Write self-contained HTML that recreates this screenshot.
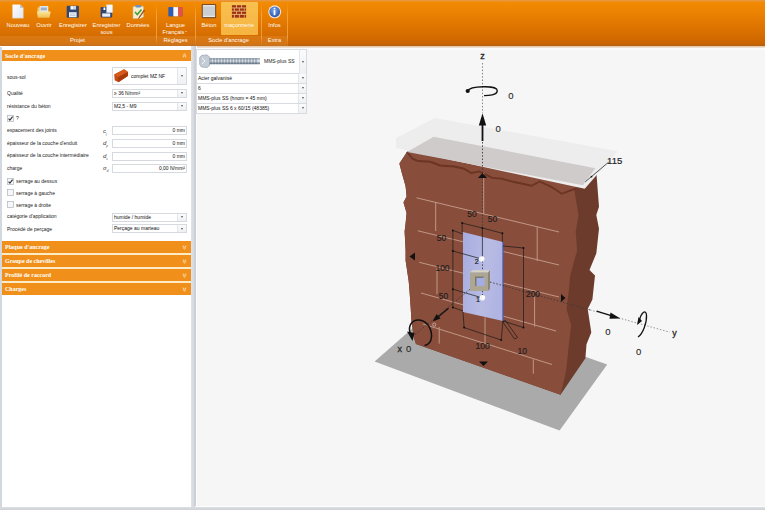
<!DOCTYPE html>
<html><head><meta charset="utf-8">
<style>
*{margin:0;padding:0;box-sizing:border-box}
html,body{width:765px;height:510px;overflow:hidden;background:#f6f6f6;font-family:"Liberation Sans",sans-serif}
.a{position:absolute}
#rib{left:0;top:0;width:765px;height:46px;background:linear-gradient(#e59a4c 0px,#f28a02 2.5px,#ec8302 12px,#df7500 26px,#d26a00 38px,#c96400 44px,#ad5e18 46px)}
.lab{position:absolute;color:#fffaf4;font-size:5.7px;white-space:nowrap;text-align:center;transform:translateX(-50%);line-height:7px}
.sep{position:absolute;top:3px;width:1px;height:42px;background:linear-gradient(rgba(255,200,120,0),rgba(255,190,110,.55) 30%,rgba(255,190,110,.55) 80%,rgba(255,200,120,0))}
#lp{left:0;top:46px;width:192px;height:464px;background:#fff}
.hd{position:absolute;left:2px;width:189px;height:11px;background:#f0901a;color:#fff;font-weight:bold;font-family:"Liberation Serif",serif;font-size:6px;line-height:12px;padding-left:3px;white-space:nowrap}
.hd i{position:absolute;right:5px;top:0;font-style:normal;font-size:5px}
.lb{position:absolute;left:7px;font-size:5px;color:#1a1a1a;white-space:nowrap;line-height:6px}
.sym{position:absolute;left:103px;font-size:6px;color:#333;font-style:italic;line-height:6px}
.cb{position:absolute;left:112px;width:75px;background:#fff;border:1px solid #d6d9de;font-size:5px;color:#111;white-space:nowrap;padding-left:1px}
.cb b{position:absolute;right:0;top:0;bottom:0;width:9px;border-left:1px solid #e3e6ea;background:linear-gradient(#fafbfc,#eef0f3)}
.cb b:after{content:"";position:absolute;left:3px;top:50%;margin-top:-1px;border-left:1.5px solid transparent;border-right:1.5px solid transparent;border-top:2px solid #555}
.inp{position:absolute;left:112px;width:75px;height:9px;background:#fff;border:1px solid #d6d9de;font-size:5px;color:#111;text-align:right;padding-right:1px;line-height:7px;white-space:nowrap}
.chk{position:absolute;left:7px;width:6px;height:6px;border:1px solid #b9bec6;background:#f4f5f7}
.lb2{position:absolute;left:16px;font-size:5px;color:#1a1a1a;white-space:nowrap;line-height:6px}
.rc{position:absolute;left:196px;width:111px;height:10px;background:#fff;border:1px solid #d8dbe0;border-top:none;font-size:5px;color:#111;line-height:9px;padding-left:1px;white-space:nowrap}
.rc b{position:absolute;right:0;top:0;bottom:0;width:8px;border-left:1px solid #e3e6ea;background:linear-gradient(#fafbfc,#eef0f3)}
.rc b:after{content:"";position:absolute;left:2.5px;top:50%;margin-top:-1px;border-left:1.5px solid transparent;border-right:1.5px solid transparent;border-top:2px solid #555}
</style></head><body>
<!-- ribbon -->
<div id="rib" class="a"></div>
<div class="a" style="left:0;top:35.5px;width:288px;height:10px;background:linear-gradient(rgba(255,190,110,.16),rgba(255,185,100,.2))"></div>
<div class="a" style="left:0;top:46px;width:765px;height:1.5px;background:linear-gradient(#e4c09c,#f2e6dc)"></div>
<div class="a" style="left:0;top:47.5px;width:191px;height:2.5px;background:#f8f4f0"></div>
<div class="a" style="left:195px;top:47.5px;width:570px;height:2.5px;background:#fbfbfc"></div>

<div class="sep" style="left:156px"></div>
<div class="sep" style="left:195px"></div>
<div class="sep" style="left:261px"></div>
<div class="sep" style="left:287px"></div>

<!-- highlight -->
<div class="a" style="left:221px;top:2px;width:37px;height:33px;background:linear-gradient(#f9c050,#f6b440);border-radius:1px"></div>

<svg class="a" style="left:0;top:0" width="300" height="46" viewBox="0 0 300 46">
<defs>
<linearGradient id="doc" x1="0" y1="0" x2="1" y2="1"><stop offset="0" stop-color="#ffffff"/><stop offset="1" stop-color="#dfe6f2"/></linearGradient>
<linearGradient id="fold" x1="0" y1="0" x2="0" y2="1"><stop offset="0" stop-color="#fbe7a0"/><stop offset="1" stop-color="#f0bf50"/></linearGradient>
<radialGradient id="inf" cx="0.45" cy="0.35" r="0.7"><stop offset="0" stop-color="#7aa8ec"/><stop offset="1" stop-color="#1f4ea8"/></radialGradient>
</defs>
<!-- Nouveau -->
<path d="M12.4,4.5 H20.2 L23.4,7.7 V18.3 H12.4 Z" fill="url(#doc)" stroke="#e8b880" stroke-width="0.4"/>
<path d="M20.2,4.5 V7.7 H23.4 Z" fill="#a9b8cc"/>
<!-- Ouvrir -->
<path d="M37.5,7.5 H42 L43,6.3 H48.5 V12 H37.5 Z" fill="#f3c65e"/>
<rect x="39.5" y="6" width="8.5" height="6.5" fill="#dfe6ee"/>
<rect x="40.8" y="7.5" width="6" height="2.8" fill="#9fb0c6"/>
<path d="M36.9,11.5 H50.7 L49.5,17.7 H37.8 Z" fill="url(#fold)"/>
<!-- Enregistrer -->
<rect x="66.7" y="5.7" width="12.2" height="12" rx="1" fill="#33466f"/>
<rect x="70.3" y="6" width="5.8" height="3.6" fill="#c9d2e2"/>
<rect x="71.2" y="6.5" width="1.8" height="2.6" fill="#fff"/>
<rect x="69" y="12.2" width="7.6" height="5" fill="#eaf0f8"/>
<line x1="70" y1="14" x2="75.5" y2="14" stroke="#9aa8c0" stroke-width="0.5"/>
<line x1="70" y1="15.5" x2="75.5" y2="15.5" stroke="#9aa8c0" stroke-width="0.5"/>
<!-- Enregistrer sous -->
<rect x="100.6" y="6.9" width="11.6" height="10.6" rx="1" fill="#33466f"/>
<rect x="102.2" y="13.4" width="8" height="3.3" fill="#eaf0f8"/>
<rect x="103.5" y="7.5" width="1.8" height="2.5" fill="#fff"/>
<rect x="106.6" y="4.8" width="6" height="7.8" fill="#f4f7fb" stroke="#cfd7e4" stroke-width="0.4"/>
<!-- Données -->
<path d="M133,6.5 H143.5 V17 L140,18.6 H133 Z" fill="#f3ecd0" stroke="#c8b890" stroke-width="0.5"/>
<rect x="135.5" y="5" width="5.5" height="2.6" rx="1" fill="#6f8fc8"/>
<path d="M135,12 L137.3,14.5 L141.5,9.5" fill="none" stroke="#3aa030" stroke-width="1.5"/>
<path d="M144.7,10.5 L139.5,17.5 L138.6,18.6 L139.2,17 L144,10 Z" fill="#b05018" stroke="#8a4010" stroke-width="0.6"/>
<!-- flag -->
<rect x="168.3" y="6.9" width="14.4" height="9.6" rx="1" fill="#333" opacity="0.35"/>
<rect x="168.6" y="7.1" width="4.8" height="9.2" fill="#2a5cc0"/>
<rect x="173.4" y="7.1" width="4.8" height="9.2" fill="#f8f8fb"/>
<rect x="178.2" y="7.1" width="4.4" height="9.2" fill="#e25050"/>
<!-- beton -->
<rect x="201.7" y="4" width="14.5" height="14.2" rx="1.2" fill="#7b4b22"/>
<rect x="202.8" y="5.1" width="12.3" height="12" fill="#cbcfd3"/>
<rect x="203" y="5.3" width="12" height="1" fill="#eef0f2"/>
<rect x="203" y="15.8" width="12" height="1" fill="#eef0f2"/>
<!-- brick -->
<rect x="231.9" y="5.2" width="14.2" height="12.5" fill="#f2b88a"/>
<g fill="#9c3608">
<rect x="231.9" y="5.2" width="4.2" height="2.3"/><rect x="236.9" y="5.2" width="4.2" height="2.3"/><rect x="241.9" y="5.2" width="4.2" height="2.3"/>
<rect x="231.9" y="8.4" width="2" height="2.3"/><rect x="234.7" y="8.4" width="4.2" height="2.3"/><rect x="239.7" y="8.4" width="4.2" height="2.3"/><rect x="244.5" y="8.4" width="1.6" height="2.3"/>
<rect x="231.9" y="11.6" width="4.2" height="2.3"/><rect x="236.9" y="11.6" width="4.2" height="2.3"/><rect x="241.9" y="11.6" width="4.2" height="2.3"/>
<rect x="231.9" y="14.8" width="2" height="2.9"/><rect x="234.7" y="14.8" width="4.2" height="2.9"/><rect x="239.7" y="14.8" width="4.2" height="2.9"/><rect x="244.5" y="14.8" width="1.6" height="2.9"/>
</g>
<!-- info -->
<circle cx="274.7" cy="11.8" r="6.5" fill="#f4e2d0"/>
<circle cx="274.7" cy="11.8" r="5.4" fill="url(#inf)"/>
<circle cx="274.5" cy="8.6" r="0.9" fill="#fff"/>
<path d="M273.6,10.2 H275.4 V15.2 H273.6 Z" fill="#fff"/>
</svg>
<div class="lab" style="left:18px;top:21.5px">Nouveau</div>
<div class="lab" style="left:44px;top:21.5px">Ouvrir</div>
<div class="lab" style="left:73px;top:21.5px">Enregistrer</div>
<div class="lab" style="left:106.5px;top:21.5px">Enregistrer<br>sous</div>
<div class="lab" style="left:138px;top:21.5px">Données</div>
<div class="lab" style="left:77.5px;top:37px">Projet</div>
<div class="lab" style="left:175.5px;top:21.5px">Langue</div>
<div class="lab" style="left:173.5px;top:28.5px">Français</div>
<div class="a" style="left:185px;top:30.5px;border-left:1.2px solid transparent;border-right:1.2px solid transparent;border-top:1.6px solid #f8d8b0"></div>
<div class="lab" style="left:175.5px;top:37px">Réglages</div>
<div class="lab" style="left:209px;top:21.5px">Béton</div>
<div class="lab" style="left:239px;top:21.5px">maçonnerie</div>
<div class="lab" style="left:228.5px;top:37px">Socle d'ancrage</div>
<div class="lab" style="left:274.5px;top:21.5px">Infos</div>
<div class="lab" style="left:274.5px;top:37px">Extra</div>

<!-- left panel -->
<div id="lp" class="a"></div>
<div class="a" style="left:0;top:47px;width:2px;height:463px;background:#d3d7de"></div>
<div class="a" style="left:191px;top:46px;width:4.5px;height:464px;background:linear-gradient(90deg,#e0e2e6 0%,#d6d9de 50%,#c6cad0 85%,#d8dbe0 100%)"></div>
<div class="a" style="left:195.5px;top:46px;width:1.5px;height:461px;background:#fcfcfd"></div>
<div class="a" style="left:195px;top:505.5px;width:570px;height:1.5px;background:#fdfdfd"></div>
<div class="a" style="left:0;top:507px;width:765px;height:3px;background:linear-gradient(#dcdfe3,#cdd0d5)"></div>

<div class="hd" style="top:50px">Socle d'ancrage<svg style="position:absolute;right:4.5px;top:3px" width="5" height="5" viewBox="0 0 5 5"><path d="M0.8,2.6 L2.5,1 L4.2,2.6 M0.8,4.4 L2.5,2.8 L4.2,4.4" fill="none" stroke="#fde9c8" stroke-width="0.9"/></svg></div>
<div class="lb" style="top:73.5px">sous-sol</div>
<div class="cb" style="top:67px;height:18px;line-height:16px;padding-left:18px">complet MZ NF<b></b></div>
<svg class="a" style="left:113px;top:68px" width="17" height="16" viewBox="113 68 17 16"><polygon points="114.2,74.5 124.1,69.2 128,71.9 127.8,76 118.4,82.3 114.7,80.2" fill="#c64a12"/><polygon points="114.2,74.5 124.1,69.2 128,71.9 118,77.3" fill="#d55a1c"/><polygon points="118,77.3 128,71.9 127.8,76 118.4,82.3" fill="#a83a0c"/></svg>
<div class="lb" style="top:90px">Qualité</div>
<div class="cb" style="top:88.5px;height:9.5px;line-height:7.5px">≥ 36 N/mm²<b></b></div>
<div class="lb" style="top:103px">résistance du béton</div>
<div class="cb" style="top:101.5px;height:9.5px;line-height:7.5px">M2,5 - M9<b></b></div>
<svg class="a" style="left:7px;top:114.5px" width="7" height="7" viewBox="0 0 7 7"><rect x="0.5" y="0.5" width="6" height="6" fill="#f6f7f9" stroke="#b8bdc5" stroke-width="0.8"/><path d="M1.6,3.6 L2.9,5.2 L5.6,1.6" fill="none" stroke="#333" stroke-width="1.1"/></svg>
<div class="lb2" style="top:115px">?</div>

<div class="lb" style="top:127.2px">espacement des joints</div>
<div class="sym" style="top:127.5px">c<sub style="font-size:3px">j</sub></div>
<div class="inp" style="top:126px">0 mm</div>
<div class="lb" style="top:139.7px;">épaisseur de la couche d'enduit</div>
<div class="sym" style="top:140px">d<sub style="font-size:3px">p</sub></div>
<div class="inp" style="top:138.8px">0 mm</div>
<div class="lb" style="top:152.3px;">épaisseur de la couche intermédiaire</div>
<div class="sym" style="top:152.6px">d<sub style="font-size:3px">s</sub></div>
<div class="inp" style="top:151.5px">0 mm</div>
<div class="lb" style="top:164.8px;">charge</div>
<div class="sym" style="top:165px">σ<sub style="font-size:3px">d</sub></div>
<div class="inp" style="top:164px">0,00 N/mm²</div>

<svg class="a" style="left:7px;top:177.7px" width="7" height="7" viewBox="0 0 7 7"><rect x="0.5" y="0.5" width="6" height="6" fill="#f6f7f9" stroke="#b8bdc5" stroke-width="0.8"/><path d="M1.6,3.6 L2.9,5.2 L5.6,1.6" fill="none" stroke="#333" stroke-width="1.1"/></svg>
<div class="lb2" style="top:178px">serrage au dessus</div>
<svg class="a" style="left:7px;top:189.4px" width="7" height="7" viewBox="0 0 7 7"><rect x="0.5" y="0.5" width="6" height="6" fill="#f6f7f9" stroke="#b8bdc5" stroke-width="0.8"/></svg>
<div class="lb2" style="top:189.7px">serrage à gauche</div>
<svg class="a" style="left:7px;top:201.2px" width="7" height="7" viewBox="0 0 7 7"><rect x="0.5" y="0.5" width="6" height="6" fill="#f6f7f9" stroke="#b8bdc5" stroke-width="0.8"/></svg>
<div class="lb2" style="top:201.5px">serrage à droite</div>
<div class="lb" style="top:213.3px">catégorie d'application</div>
<div class="cb" style="top:212.5px;height:9px;line-height:7px">humide / humide<b></b></div>
<div class="lb" style="top:225.8px">Procédé de perçage</div>
<div class="cb" style="top:224.3px;height:9px;line-height:7px">Perçage au marteau<b></b></div>

<div class="a" style="left:2px;top:252px;width:189px;height:31.5px;background:#fcebc4"></div>
<div class="hd" style="top:241px;height:11.5px">Plaque d'ancrage<svg style="position:absolute;right:4.5px;top:3.5px" width="5" height="5" viewBox="0 0 5 5"><path d="M0.8,0.6 L2.5,2.2 L4.2,0.6 M0.8,2.4 L2.5,4 L4.2,2.4" fill="none" stroke="#fde9c8" stroke-width="0.9"/></svg></div>
<div class="hd" style="top:255px;height:11.5px">Groupe de chevilles<svg style="position:absolute;right:4.5px;top:3.5px" width="5" height="5" viewBox="0 0 5 5"><path d="M0.8,0.6 L2.5,2.2 L4.2,0.6 M0.8,2.4 L2.5,4 L4.2,2.4" fill="none" stroke="#fde9c8" stroke-width="0.9"/></svg></div>
<div class="hd" style="top:269px;height:11.5px">Profilé de raccord<svg style="position:absolute;right:4.5px;top:3.5px" width="5" height="5" viewBox="0 0 5 5"><path d="M0.8,0.6 L2.5,2.2 L4.2,0.6 M0.8,2.4 L2.5,4 L4.2,2.4" fill="none" stroke="#fde9c8" stroke-width="0.9"/></svg></div>
<div class="hd" style="top:283.3px;height:11.5px">Charges<svg style="position:absolute;right:4.5px;top:3.5px" width="5" height="5" viewBox="0 0 5 5"><path d="M0.8,0.6 L2.5,2.2 L4.2,0.6 M0.8,2.4 L2.5,4 L4.2,2.4" fill="none" stroke="#fde9c8" stroke-width="0.9"/></svg></div>

<!-- 3D view right controls -->
<div class="a" style="left:196px;top:49px;width:111px;height:24.5px;background:#fff;border:1px solid #d8dbe0"></div>
<svg class="a" style="left:196px;top:49px" width="111" height="25" viewBox="196 49 111 25">
<defs><linearGradient id="sh" x1="0" y1="0" x2="0" y2="1"><stop offset="0" stop-color="#8a99aa"/><stop offset="0.45" stop-color="#e8eef4"/><stop offset="1" stop-color="#5e6e80"/></linearGradient></defs>
<rect x="208" y="58.2" width="52" height="6" fill="url(#sh)"/>
<g stroke="#4e5c6c" stroke-width="0.6">
<line x1="211" y1="58.2" x2="211" y2="64.2"/><line x1="214" y1="58.2" x2="214" y2="64.2"/><line x1="217" y1="58.2" x2="217" y2="64.2"/><line x1="220" y1="58.2" x2="220" y2="64.2"/><line x1="223" y1="58.2" x2="223" y2="64.2"/><line x1="226" y1="58.2" x2="226" y2="64.2"/><line x1="229" y1="58.2" x2="229" y2="64.2"/><line x1="232" y1="58.2" x2="232" y2="64.2"/><line x1="235" y1="58.2" x2="235" y2="64.2"/><line x1="238" y1="58.2" x2="238" y2="64.2"/><line x1="241" y1="58.2" x2="241" y2="64.2"/><line x1="244" y1="58.2" x2="244" y2="64.2"/><line x1="247" y1="58.2" x2="247" y2="64.2"/><line x1="250" y1="58.2" x2="250" y2="64.2"/><line x1="253" y1="58.2" x2="253" y2="64.2"/><line x1="256" y1="58.2" x2="256" y2="64.2"/>
</g>
<polygon points="201.5,55.5 207,54.9 209.5,57 209.5,65.5 207,67.5 201.5,67 199.7,64.5 199.7,57.5" fill="#c4ccd6" stroke="#8a96a4" stroke-width="0.6"/>
<path d="M202,58 L205,61 L202,64" fill="none" stroke="#f4f8fc" stroke-width="0.9"/>
</svg>
<div class="a" style="left:264px;top:58px;font-size:5px;color:#222;white-space:nowrap">MMS-plus SS</div>
<div class="a" style="left:299px;top:49px;width:8px;height:24.5px;border-left:1px solid #e3e6ea;border-right:1px solid #d8dbe0;border-top:1px solid #d8dbe0;background:linear-gradient(#fafbfc,#eef0f3)"><span style="position:absolute;left:2px;top:11px;border-left:1.5px solid transparent;border-right:1.5px solid transparent;border-top:2px solid #555"></span></div>
<div class="rc" style="top:73.5px">Acier galvanisé<b></b></div>
<div class="rc" style="top:83.5px">6<b></b></div>
<div class="rc" style="top:93.5px">MMS-plus SS (hnom = 45 mm)<b></b></div>
<div class="rc" style="top:103.5px">MMS-plus SS 6 x 60/15 (48385)<b></b></div>

<!-- SCENE -->
<svg class="a" style="left:0;top:0" width="765" height="510" viewBox="0 0 765 510">
<defs>
<filter id="bl" x="-5%" y="-50%" width="110%" height="200%"><feGaussianBlur stdDeviation="0.6"/></filter>
<linearGradient id="pl" x1="0" y1="0" x2="1" y2="0.3"><stop offset="0" stop-color="#a6ace0"/><stop offset="0.65" stop-color="#b8bce4"/><stop offset="1" stop-color="#b0b4e2"/></linearGradient>
</defs>
<!-- floor -->
<polygon points="374.6,361.4 438.8,305.2 607.2,364.6 559.6,430.5" fill="#aaaaaa"/>
<!-- wall right face -->
<polygon points="407,152 433.6,136.7 596,168 599,206.7 596.3,215 599,228.7 596.3,253.4 589.5,270 595,275.4 592.4,299.4 587.7,308.9 591.3,332.4 586.5,344.2 585.4,358.3 560.5,394.8 416,344 414,338 411.5,322 410.7,308 409.7,293.5 408.7,281.2 405.6,260.6 405.6,250 404.6,231.5 405.6,223.2 406.6,213 403.5,202.6 406.6,196.5 405.6,186.2 401.5,171.8 399.4,163.5" fill="#6d3b2c"/>
<!-- wall front face -->
<polygon points="407,152 399.4,163.5 401.5,171.8 405.6,186.2 406.6,196.5 403.5,202.6 406.6,213 405.6,223.2 404.6,231.5 405.6,250 405.6,260.6 408.7,281.2 409.7,293.5 410.7,308 411.5,322 414,338 416,344 560.5,394.8 565.3,374.8 566.5,367.8 568.9,344.2 571.2,325.3 566.5,308.9 568.9,290 570.2,275.4 577,250.7 575.7,231.4 578.5,215 574.3,190.2 578,185" fill="#894d3b"/>
<!-- jagged top shading -->
<polyline points="407,152 412.5,158.6 418,161 430.5,161.8 440,165.5 454,166.5 463.5,168.5 471.4,173 479.2,171.4 492.3,177.9 501.4,178.6 513.2,181.8 531.5,185.8 539.7,181.5 551.2,186.8 561.8,193.8 570.6,190.3 576,188.5" fill="none" stroke="#6a3424" stroke-width="1.9" filter="url(#bl)"/>
<!-- mortar lines -->
<g stroke="#cfac9c" stroke-width="1" fill="none" opacity="0.78">
<line x1="416.5" y1="197.8" x2="559" y2="232"/>
<line x1="417.8" y1="230.8" x2="559" y2="265"/>
<line x1="419.2" y1="262.3" x2="559" y2="297"/>
<line x1="421" y1="293" x2="556" y2="331"/>
<line x1="423" y1="324" x2="552" y2="364.5"/>
<line x1="483.7" y1="173" x2="483.7" y2="214"/>
<line x1="435.7" y1="202" x2="435.7" y2="231"/>
<line x1="537.2" y1="227" x2="537.2" y2="261"/>
<line x1="437" y1="268" x2="437" y2="294"/>
<line x1="534.6" y1="296.5" x2="534.6" y2="326.6"/>
<line x1="485" y1="317.5" x2="485" y2="345"/>
<line x1="439.2" y1="327" x2="439.2" y2="343.6"/>
<line x1="533.3" y1="359.3" x2="533.3" y2="373.7"/>
</g>
<!-- slab -->
<polygon points="396,138 435,118 617.6,151.2 584.7,188.8 396,148" fill="#ededed"/>
<polygon points="407,152 433.6,136.7 595.3,168.2 583,185.3" fill="#cfcbca"/>
<!-- plate -->
<polygon points="463,232 503,242 503,321 463,312" fill="url(#pl)"/>
<line x1="503" y1="242" x2="503" y2="321" stroke="#4d58ac" stroke-width="1.3"/>
<!-- dim lines -->
<g stroke="#1a1a1a" stroke-width="0.7" fill="none">
<polyline points="462.2,232 462.2,223.1 482.4,228 502.4,233.3 502.4,242"/>
<line x1="482.4" y1="228" x2="482.4" y2="259"/>
<polyline points="463,234 452.9,230.4 452.9,307.4 463,311"/>
<line x1="452.9" y1="251" x2="481.7" y2="259"/>
<line x1="452.9" y1="289.2" x2="482" y2="297.8"/>
<polyline points="503,246 523.5,248 523.5,327.6 503,321"/>
<polyline points="463,312 464.1,327.6 501.2,340 503,321"/>
<polygon points="502.5,321.5 514.5,339 517.5,337.5 505.5,320.5"/>
</g>
<g fill="#111">
<circle cx="462.2" cy="223.1" r="1"/><circle cx="482.4" cy="228" r="1"/><circle cx="502.4" cy="233.3" r="1"/>
<circle cx="452.9" cy="230.4" r="1"/><circle cx="452.9" cy="251" r="1"/><circle cx="452.9" cy="289.2" r="1"/><circle cx="452.9" cy="307.4" r="1"/>
<circle cx="523.5" cy="248" r="1"/><circle cx="523.5" cy="327.6" r="1"/>
<circle cx="464.1" cy="327.6" r="1"/><circle cx="501.2" cy="340" r="1"/>
</g>


<!-- axes dotted -->
<g stroke="#3a3a3a" stroke-width="0.9" stroke-dasharray="1.5 1.8" fill="none">
<line x1="482.5" y1="63" x2="482.5" y2="113" stroke="#777"/>
<line x1="482.5" y1="142" x2="482.5" y2="228"/>
<line x1="482.5" y1="261" x2="482.5" y2="296"/>
<line x1="490" y1="282" x2="590" y2="309.9"/>
<line x1="590" y1="309.9" x2="669.8" y2="332.2" stroke="#888"/>
<line x1="480" y1="281" x2="412" y2="337"/>
</g>
<!-- tube -->
<polygon points="470,272.5 472.5,270.3 490,270.3 488,272.5" fill="#d9d5c6"/>
<polygon points="488,272.5 490,270.3 490,288.8 488,291" fill="#8c8676"/>
<rect x="470" y="272.5" width="18" height="18.5" fill="#aca692"/>
<rect x="475" y="276.5" width="9.5" height="9.5" fill="#a4ace6"/>
<polygon points="475,276.5 484.5,276.5 483,278 476.5,278 476.5,286 475,286" fill="#7e7868"/>
<circle cx="481.7" cy="259" r="2.8" fill="#f4f4f4"/><circle cx="482.5" cy="258.2" r="1.6" fill="#fff"/>
<circle cx="482.4" cy="297.8" r="2.8" fill="#f4f4f4"/><circle cx="483.2" cy="297" r="1.6" fill="#fff"/>
<!-- z arrow -->
<line x1="482.5" y1="124" x2="482.5" y2="141" stroke="#111" stroke-width="1.8"/>
<polygon points="482.5,113.2 478.8,125.4 486.2,125.4" fill="#111"/>
<path d="M467.7,91 C470,86 497,85 497.2,90.5 C497.5,95.5 488,95.6 484,95.6" fill="none" stroke="#111" stroke-width="1.4"/>
<circle cx="467.7" cy="91" r="2.1" fill="#111"/>
<!-- y arrow -->
<line x1="596.6" y1="311.1" x2="612" y2="315.8" stroke="#111" stroke-width="1.3"/>
<polygon points="620.4,318.4 610.5,312.6 609.5,318.8" fill="#111"/>
<path d="M639,322 C641,312 646,309 646.5,315 C647,322 643,334 638,337" fill="none" stroke="#111" stroke-width="1.3"/>
<polygon points="637,325 638.5,317 642,321" fill="#111"/>
<!-- x arrow -->
<line x1="448.5" y1="308.3" x2="438" y2="317" stroke="#111" stroke-width="1.3"/>
<polygon points="432.7,321.4 436.5,314 440.5,318.5" fill="#111"/>
<circle cx="434.2" cy="324.6" r="1.6" fill="none" stroke="#d8c0b0" stroke-width="0.7"/>
<path d="M410.5,334 C407,325 413,319.5 419,320 C427,320.5 432,329 431.5,337 C431,342 428,345 424.5,345.5" fill="none" stroke="#111" stroke-width="1.5"/>
<polygon points="412.5,341 407,331.5 414.5,333" fill="#111"/>
<!-- triangles -->
<polygon points="478,178 482.5,173 487,178" fill="#111"/>
<polygon points="479,361.5 488,361.5 483.5,366" fill="#111"/>
<polygon points="409.5,256.5 415,252.5 415,260.5" fill="#111"/>
<polygon points="565.5,298 561,294 561,302" fill="#111"/>
<!-- 115 dim -->
<line x1="585.3" y1="181.8" x2="608.8" y2="162" stroke="#111" stroke-width="0.7"/>
<circle cx="591.5" cy="176.6" r="0.9" fill="#111"/>
<!-- labels -->
<g font-family="Liberation Sans" font-size="8.5" fill="#1e1e1e" stroke="#1e1e1e" stroke-width="0.15" text-anchor="middle">
<text x="472" y="216.5">50</text>
<text x="492.5" y="221.8">50</text>
<text x="441.6" y="241.4">50</text>
<text x="442.5" y="270.8">100</text>
<text x="443.5" y="298.7">50</text>
<text x="533" y="297.3">200</text>
<text x="482.6" y="348.5">100</text>
<text x="522.3" y="353.8">10</text>
<text x="614.7" y="163.8" font-size="9.5" stroke-width="0.2">115</text>
</g>
<g font-family="Liberation Sans" font-size="7" fill="#1e1e1e" stroke="#1e1e1e" stroke-width="0.2" text-anchor="middle">
<text x="476.6" y="263.5">2</text>
<text x="477.9" y="301.5">1</text>
</g>
<g font-family="Liberation Sans" font-size="9.5" fill="#262626" stroke="#262626" stroke-width="0.1" text-anchor="middle">
<text x="510.9" y="99">0</text>
<text x="498.1" y="131.8">0</text>
<text x="608" y="334.6">0</text>
<text x="638.7" y="354.8">0</text>
<text x="408.7" y="352.2">0</text>
<text x="482.5" y="59" font-size="9" stroke-width="0.3">z</text>
<text x="674.4" y="336" font-size="9" stroke-width="0.3">y</text>
<text x="399.8" y="352" font-size="9" stroke-width="0.3">x</text>
</g>
</svg>
</body></html>
